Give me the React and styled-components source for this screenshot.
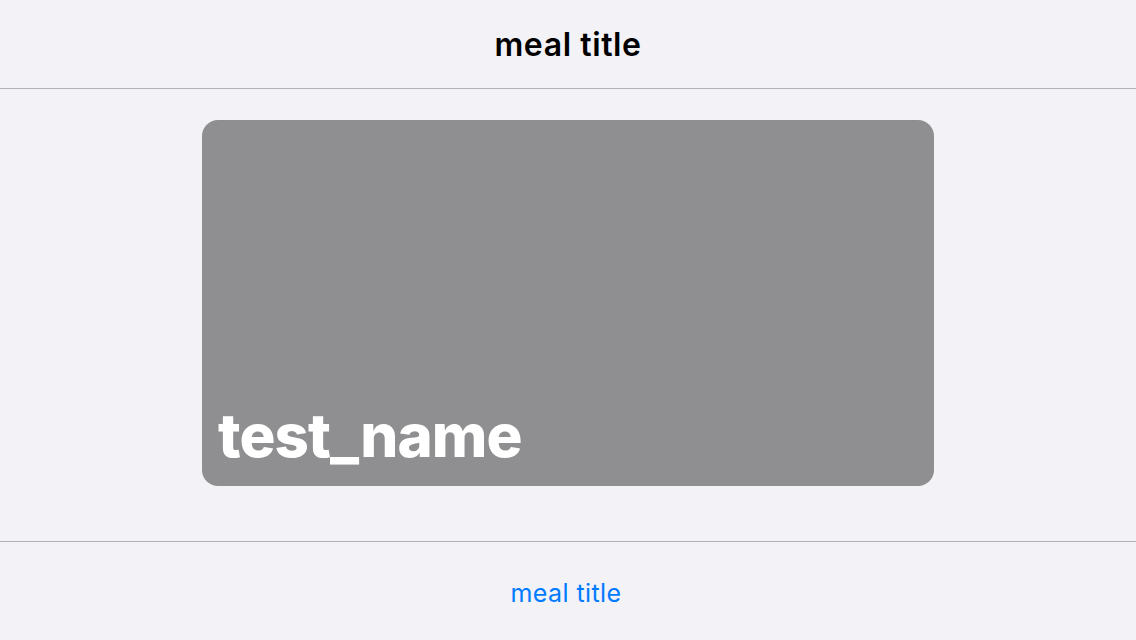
import React from 'react';
import styled, { createGlobalStyle } from 'styled-components';

const GlobalStyle = createGlobalStyle`
  html, body {
    margin: 0;
    padding: 0;
    background: #f2f2f7;
    font-family: Inter, 'Liberation Sans', sans-serif;
  }
`;

const Screen = styled.div`
  width: 1136px;
  height: 640px;
  display: flex;
  flex-direction: column;
  background: #f2f2f7;
`;

const NavBar = styled.header`
  height: 88px;
  flex: none;
  display: flex;
  align-items: center;
  justify-content: center;
  border-bottom: 1px solid #b1b1b5;
  box-sizing: content-box;
`;

const NavTitle = styled.h1`
  margin: 0;
  font-size: 32px;
  font-weight: 600;
  color: #000;
  letter-spacing: 0.6px;
`;

const Content = styled.main`
  flex: 1;
  display: flex;
  justify-content: center;
  padding-top: 31px;
`;

const Card = styled.div`
  width: 732px;
  height: 366px;
  border-radius: 16px;
  background: #8f8f92;
  display: flex;
  align-items: flex-end;
  padding: 0 16px 21px;
  box-sizing: border-box;
`;

const CardTitle = styled.div`
  font-size: 60px;
  font-weight: 800;
  color: #fff;
  letter-spacing: -0.9px;
  line-height: 1;
`;

const TabBar = styled.footer`
  height: 98px;
  flex: none;
  display: flex;
  align-items: center;
  justify-content: center;
  border-top: 1px solid #b1b1b5;
`;

const TabLink = styled.span`
  font-size: 25px;
  color: #007aff;
  letter-spacing: 0.4px;
  margin-top: 4px;
  margin-left: -4px;
`;

const App = () => (
  <Screen>
    <GlobalStyle />
    <NavBar>
      <NavTitle>meal title</NavTitle>
    </NavBar>
    <Content>
      <Card>
        <CardTitle>test_name</CardTitle>
      </Card>
    </Content>
    <TabBar>
      <TabLink>meal title</TabLink>
    </TabBar>
  </Screen>
);

export default App;
